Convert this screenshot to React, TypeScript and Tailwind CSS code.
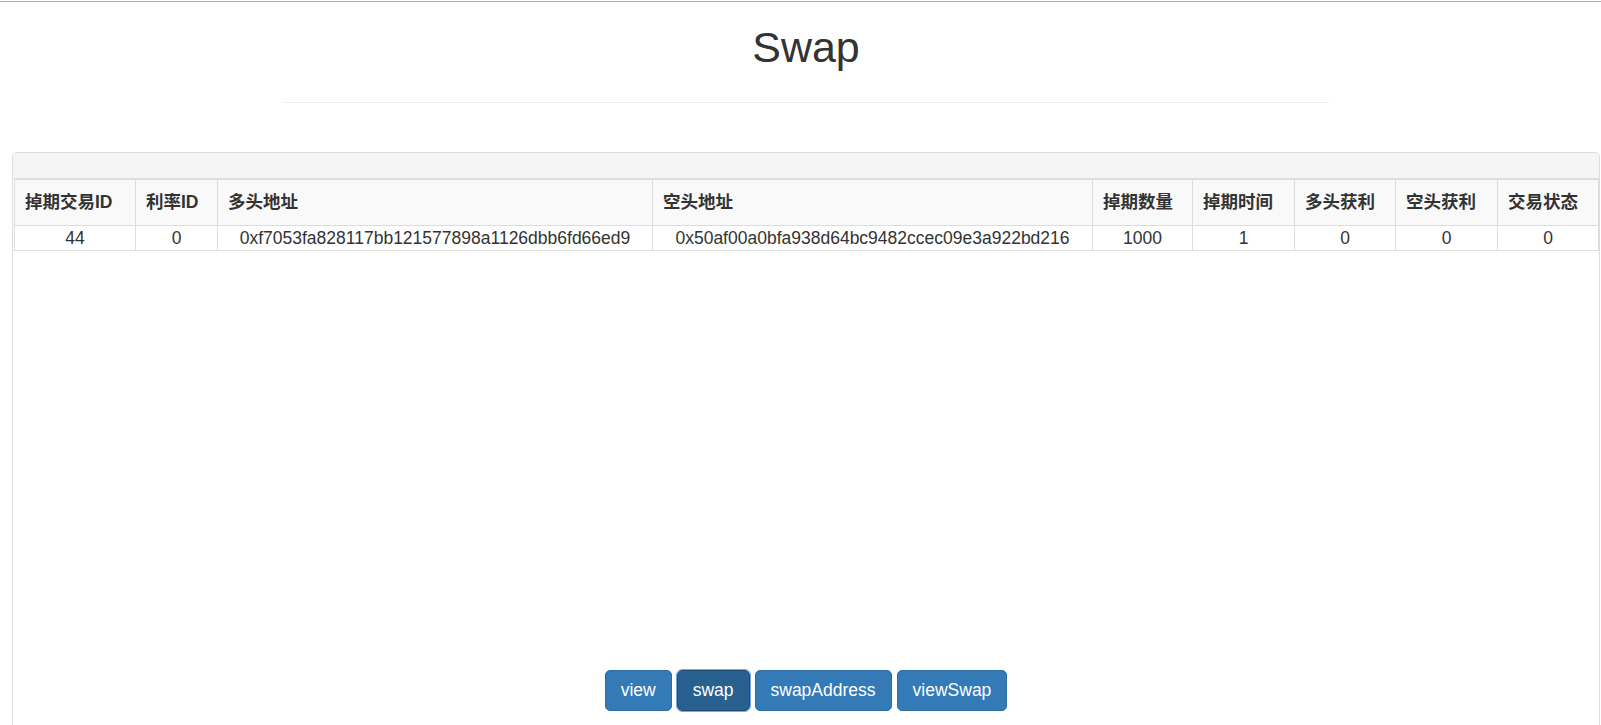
const columns = [
  { label: "掉期交易ID", width: "w-[121px]" },
  { label: "利率ID", width: "w-[82px]" },
  { label: "多头地址", width: "w-[435px]" },
  { label: "空头地址", width: "w-[440px]" },
  { label: "掉期数量", width: "w-[100px]" },
  { label: "掉期时间", width: "w-[102px]" },
  { label: "多头获利", width: "w-[101px]" },
  { label: "空头获利", width: "w-[102px]" },
  { label: "交易状态", width: "w-[101px]" },
];

const rows = [
  [
    "44",
    "0",
    "0xf7053fa828117bb121577898a1126dbb6fd66ed9",
    "0x50af00a0bfa938d64bc9482ccec09e3a922bd216",
    "1000",
    "1",
    "0",
    "0",
    "0",
  ],
];

const actions = [
  { label: "view", active: false },
  { label: "swap", active: true },
  { label: "swapAddress", active: false },
  { label: "viewSwap", active: false },
];

export default function App() {
  return (
    <div className="h-[725px] overflow-hidden bg-white font-['Liberation_Sans','Noto_Sans_CJK_SC',sans-serif] text-[17.5px] text-[#333]">
      <div className="pt-px">
        <div className="h-px bg-[#a9a9a9]" />
      </div>

      <div className="ml-[283px] w-[1046px]">
        <h1 className="mt-[22px] text-center text-[43px] leading-[46px] font-normal">Swap</h1>
        <div className="mt-[32px] h-px bg-[#eeeeee]" />
      </div>

      <div className="mt-[49px] mr-px ml-[12px] rounded-t-[5px] border border-[#dddddd]">
        <div className="h-[26px] rounded-t-[4px] border-b border-[#dddddd] bg-[#f5f5f5]" />

        <div className="h-[491px]">
          <table className="ml-px w-[1585px] table-fixed border-collapse">
            <thead>
              <tr className="bg-[#f9f9f9]">
                {columns.map((col) => (
                  <th
                    key={col.label}
                    className={`${col.width} h-[46px] border border-[#dddddd] px-[10px] text-left font-bold whitespace-nowrap`}
                  >
                    {col.label}
                  </th>
                ))}
              </tr>
            </thead>
            <tbody>
              {rows.map((row, i) => (
                <tr key={i}>
                  {row.map((cell, j) => (
                    <td
                      key={j}
                      className="h-[25px] border border-[#dddddd] p-0 text-center leading-[24px] whitespace-nowrap"
                    >
                      {cell}
                    </td>
                  ))}
                </tr>
              ))}
            </tbody>
          </table>
        </div>

        <div className="flex justify-center gap-[5px] pb-[40px]">
          {actions.map((btn) => (
            <button
              key={btn.label}
              className={
                btn.active
                  ? "h-[41px] rounded-[5px] border border-[#204d74] bg-[#286090] px-[15px] leading-[25px] text-white outline outline-1 outline-[#7aa7ee]"
                  : "h-[41px] rounded-[5px] border border-[#2e6da4] bg-[#337ab7] px-[15px] leading-[25px] text-white"
              }
            >
              {btn.label}
            </button>
          ))}
        </div>
      </div>
    </div>
  );
}
